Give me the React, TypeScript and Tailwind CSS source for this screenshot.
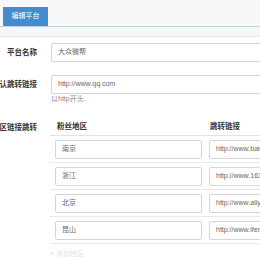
import React from "react";

const font = { fontFamily: '"Liberation Sans", "Noto Sans CJK SC", sans-serif' };

function Input({ value, w }: { value: string; w: string }) {
  return (
    <div
      className={`${w} h-[19px] shrink-0 border border-[#d5d5d5] rounded-[2px] bg-white flex items-center px-[6px] text-[7px] text-[#666] whitespace-nowrap overflow-hidden`}
    >
      {value}
    </div>
  );
}

function Label({ text }: { text: string }) {
  return (
    <div className="w-[37px] shrink-0 flex justify-end overflow-visible">
      <span className="shrink-0 whitespace-nowrap text-[7.5px] font-bold text-[#333]">{text}</span>
    </div>
  );
}

const rows = [
  ["南京", "http://www.baidu.com"],
  ["浙江", "http://www.163.com"],
  ["北京", "http://www.aliyun.com"],
  ["昆山", "http://www.ifeng.com"],
];

export default function App() {
  return (
    <div className="w-[260px] h-[260px] overflow-hidden bg-white" style={font}>
      <div className="h-[27px] bg-[#f8f8f8] border-b border-[#c5d0dc] pl-[3px] pt-[7px] flex">
        <div className="w-[45px] h-[19px] bg-[#438cce] text-white text-[7px] flex items-center justify-center">
          编辑平台
        </div>
      </div>
      <div className="h-[10px] bg-[#f5f8fb] border-b border-[#e6e6e6]" />
      <div className="pt-[6px]">
        <div className="flex items-center">
          <Label text="平台名称" />
          <div className="ml-[14px]">
            <Input value="大众微帮" w="w-[230px]" />
          </div>
        </div>
        <div className="flex items-center mt-[13px]">
          <Label text="默认跳转链接" />
          <div className="ml-[14px]">
            <Input value="http://www.qq.com" w="w-[230px]" />
          </div>
        </div>
        <div className="ml-[51px] mt-0 text-[7px] text-[#888] leading-[9px]">以http开头.</div>
        <div className="flex mt-[16px]">
          <div className="h-[17px] flex items-center">
            <Label text="地区链接跳转" />
          </div>
          <div className="ml-[13px] w-[260px] shrink-0">
            <div className="h-[17px] flex items-center border-b border-[#e2e2e2] text-[7.5px] font-bold text-[#333]">
              <div className="w-[155px] pl-[7px]">粉丝地区</div>
              <div className="pl-[5px]">跳转链接</div>
            </div>
            {rows.map(([a, b]) => (
              <div key={a} className="h-[27px] flex items-center border-b border-[#e8e8e8]">
                <div className="w-[155px] pl-[5px] pr-[3px]">
                  <Input value={a} w="w-[147px]" />
                </div>
                <div className="pl-[4px]">
                  <Input value={b} w="w-[120px]" />
                </div>
              </div>
            ))}
            <div className="mt-[5px] text-[7px] text-[#e2e2e2] whitespace-nowrap">+ 添加地区</div>
          </div>
        </div>
      </div>
    </div>
  );
}
